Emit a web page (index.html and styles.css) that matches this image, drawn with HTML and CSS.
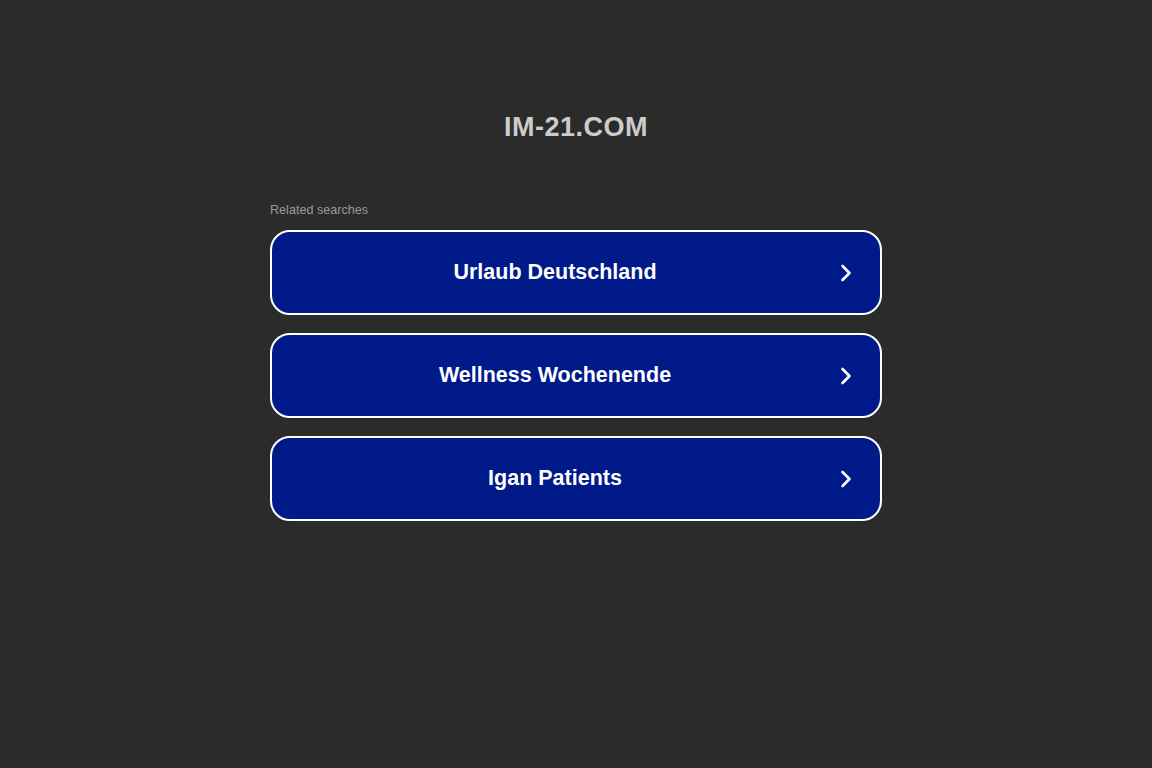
FILE: index.html
```html
<!DOCTYPE html>
<html lang="en">
<head>
<meta charset="utf-8">
<title>IM-21.COM</title>
<link rel="stylesheet" href="styles.css">
</head>
<body>
<div class="page">
  <h1 class="domain">IM-21.COM</h1>
  <div class="related">
    <div class="label">Related searches</div>
    <a class="item" href="#"><span class="text">Urlaub Deutschland</span><svg class="chev" viewBox="0 0 12 18" width="12" height="18"><path d="M2.5 2 L9.5 9 L2.5 16" fill="none" stroke="#fff" stroke-width="2.6" stroke-linecap="round" stroke-linejoin="round"/></svg></a>
    <a class="item" href="#"><span class="text">Wellness Wochenende</span><svg class="chev" viewBox="0 0 12 18" width="12" height="18"><path d="M2.5 2 L9.5 9 L2.5 16" fill="none" stroke="#fff" stroke-width="2.6" stroke-linecap="round" stroke-linejoin="round"/></svg></a>
    <a class="item" href="#"><span class="text">Igan Patients</span><svg class="chev" viewBox="0 0 12 18" width="12" height="18"><path d="M2.5 2 L9.5 9 L2.5 16" fill="none" stroke="#fff" stroke-width="2.6" stroke-linecap="round" stroke-linejoin="round"/></svg></a>
  </div>
</div>
</body>
</html>
```
FILE: styles.css
```css
html, body {
  margin: 0;
  padding: 0;
  background: #2b2b2b;
  font-family: "Liberation Sans", Arial, sans-serif;
}
.page {
  display: flex;
  flex-direction: column;
  align-items: center;
  padding-top: 111px;
}
.domain {
  margin: 0;
  font-size: 27px;
  line-height: 32px;
  font-weight: bold;
  color: #cccccc;
  letter-spacing: 0.5px;
}
.related {
  width: 612px;
  margin-top: 59px;
  display: flex;
  flex-direction: column;
}
.label {
  font-size: 12.6px;
  line-height: 16px;
  color: #9a9a9a;
  margin-bottom: 12.4px;
}
.item {
  box-sizing: border-box;
  height: 85px;
  margin-bottom: 18px;
  border: 2px solid #ffffff;
  border-radius: 20px;
  background: #011a8a;
  display: flex;
  align-items: center;
  padding: 0 28px 0 0;
  text-decoration: none;
  color: #ffffff;
}
.text {
  flex: 1;
  text-align: center;
  font-size: 21.5px;
  font-weight: bold;
  margin-right: 2px;
}
.chev {
  display: block;
}
```
